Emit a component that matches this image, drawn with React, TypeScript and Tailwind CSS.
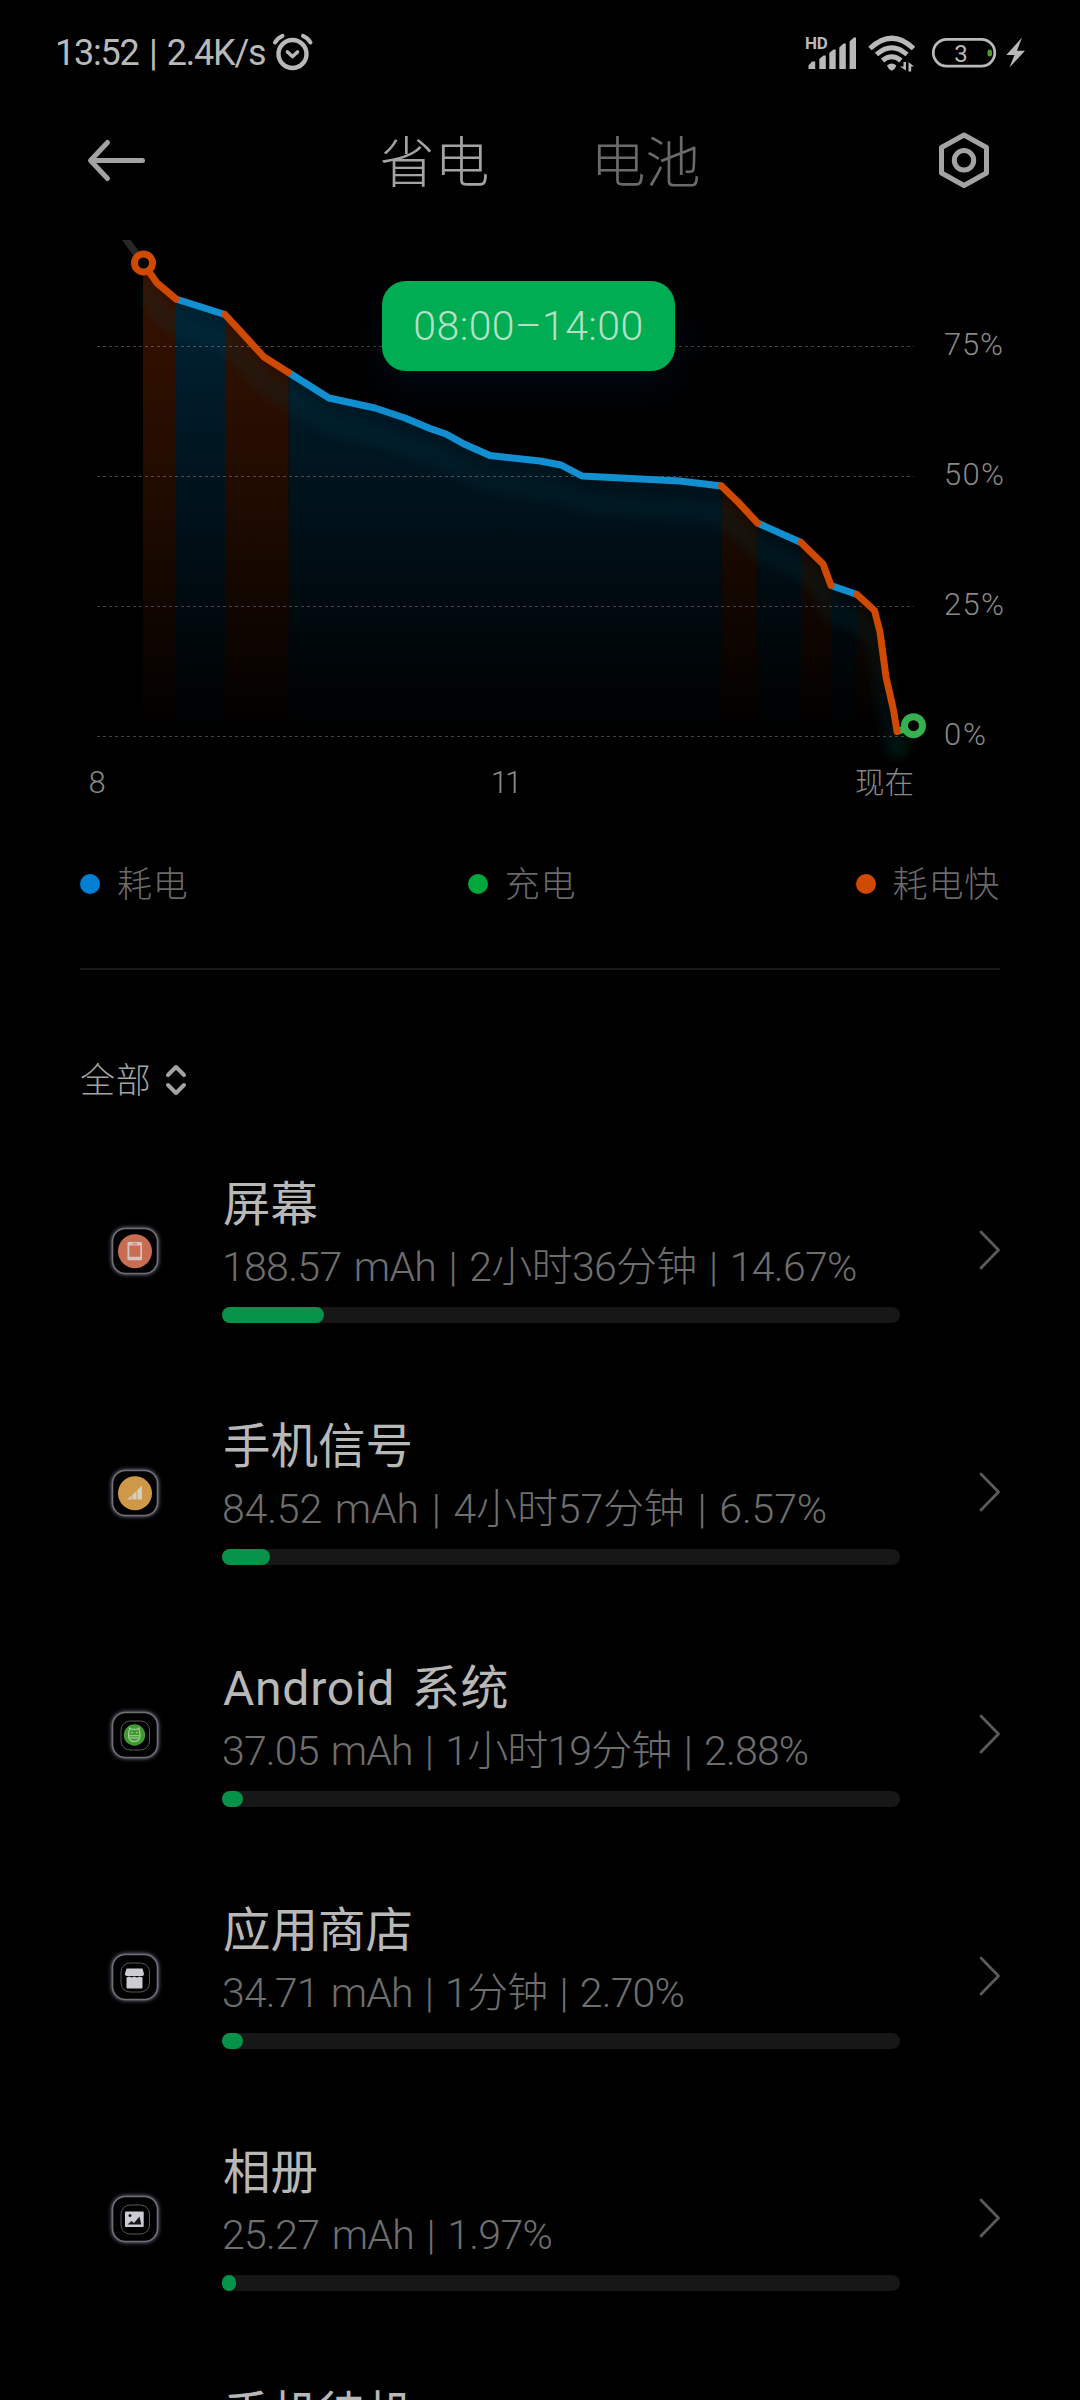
import type { ReactNode } from 'react'

type Segment = { kind: 'normal' | 'fast'; points: [number, number][] }

const segments: Segment[] = [
  { kind: 'normal', points: [[176, 299], [225, 314.5]] },
  {
    kind: 'normal',
    points: [
      [288.5, 372.5], [329, 398], [375, 408], [405, 418], [430, 428.5], [446, 434], [464, 444],
      [490, 455.5], [540, 461], [561, 465], [582, 476], [680, 481], [721.5, 486],
    ],
  },
  { kind: 'normal', points: [[757.5, 523], [801, 542.5]] },
  { kind: 'normal', points: [[831, 585.5], [857, 594.5]] },
  { kind: 'fast', points: [[143, 263], [157, 283], [176, 299]] },
  { kind: 'fast', points: [[225, 314.5], [264, 357], [288.5, 372.5]] },
  { kind: 'fast', points: [[721.5, 486], [738, 502], [757.5, 523]] },
  { kind: 'fast', points: [[801, 542.5], [823, 564], [831, 585.5]] },
  {
    kind: 'fast',
    points: [[857, 594.5], [874.5, 610.5], [880, 632], [886, 677], [893.5, 710], [897, 731.5]],
  },
]

const gridLines = [346.5, 476.5, 606.5, 736.5]

const legend = [
  { label: '耗电', color: 'bg-[#007fd3]' },
  { label: '充电', color: 'bg-[#00a73c]' },
  { label: '耗电快', color: 'bg-[#cf4900]' },
]

const toPath = (points: [number, number][]) => 'M' + points.map((p) => p.join(' ')).join('L')

const toArea = (points: [number, number][]) =>
  `${toPath(points)}L${points[points.length - 1][0]} 736L${points[0][0]} 736Z`

const wholeLine =
  'M143 263L157 283L176 299L225 314L264 357L289 372L329 398L375 408L430 428L490 455L561 465L582 476L721 486L758 523L801 542L823 564L831 585L857 594L874 610L880 632L886 677L897 731'

function StatusBar() {
  return (
    <div className="flex h-[104px] items-center justify-between pl-[55px] pr-[54px] text-[#b9b9b9]">
      <div className="flex items-center">
        <span className="w-[215px] whitespace-pre pt-0.5 text-[36px] leading-[40px] tracking-[-1.2px] [word-spacing:2.5px]">13:52 | 2.4K/s</span>
        <svg width="44" height="44" viewBox="270 31 44 44" fill="none" stroke="currentColor" strokeLinecap="round">
          <circle cx="292.5" cy="55" r="14" strokeWidth="4.4" />
          <path d="M287.5 53L292.5 57.5L297.5 53" strokeWidth="3.6" strokeLinejoin="round" />
          <path d="M275 43.5Q277.5 39 282.5 36.8M310.5 43.5Q308 39 303 36.8" strokeWidth="4" />
        </svg>
      </div>
      <svg width="222" height="44" viewBox="804 31 222 44" fill="currentColor">
        <text x="805" y="49.5" fontSize="17" fontWeight="700" letterSpacing="-0.3">HD</text>
        <path d="M808.5 70V66.5L812 62.5H815.2V70ZM819.3 70V60L823.5 56.5H825.8V70ZM829.3 70V54L833.5 50.6H835.7V70ZM839.3 70V48.5L843.5 44.5H845.8V70ZM849.6 70V42.5L853.8 38.6H856V70Z" />
        <g fill="none" stroke="currentColor" strokeWidth="5">
          <path d="M870 49.5Q891.7 29 913.5 49.5" />
          <path d="M876.5 55.5Q891.7 42 907 55.5" />
          <path d="M882.5 61.5Q891.7 54 901 61.5" />
        </g>
        <path d="M887 66.5Q891.7 62.5 896.4 66.5Q895.5 70 891.7 71.8Q888 70 887 66.5Z" />
        <path d="M903.5 63H906V71.5L900 67.5H903.5ZM908.5 72.5V63L914 67.5H911.2V72.5Z" />
        <rect x="933.3" y="40.3" width="61.5" height="26.8" rx="13.4" fill="none" stroke="currentColor" strokeWidth="2.7" />
        <text x="961" y="62.5" fontSize="24" textAnchor="middle">3</text>
        <rect x="987.5" y="50.5" width="4.5" height="7" rx="2.2" fill="#4c9c1e" />
        <path d="M1022 38.6L1006.3 56H1014.5L1009.3 68.8L1025 51.7H1017Z" />
      </svg>
    </div>
  )
}

function Header() {
  return (
    <div className="flex h-[136px] items-start justify-between pl-[87px] pr-[89px] pt-[26px] text-[#a3a3a3]">
      <svg width="60" height="66" viewBox="87 135 60 66" fill="none" stroke="currentColor" strokeWidth="5" strokeLinecap="round" strokeLinejoin="round">
        <path d="M142.5 165.5H91M107.5 147.5L90.5 165.5L107.5 183.5" />
      </svg>
      <div className="flex gap-[101px] pr-1 text-[55px] font-light leading-[66px]">
        <span>省电</span>
        <span className="text-[#6a6a6a]">电池</span>
      </div>
      <svg width="54" height="66" viewBox="937 135 54 66" fill="none" stroke="currentColor" strokeWidth="5" strokeLinejoin="round">
        <path d="M964 140L986.5 152.5V178L964 190.5L941.5 178V152.5Z" />
        <circle cx="964" cy="165.3" r="9.7" />
      </svg>
    </div>
  )
}

function Chart() {
  return (
    <div className="relative">
      <svg className="block" width="1080" height="580" viewBox="0 240 1080 580" fill="none">
        <defs>
          <linearGradient id="normal" gradientUnits="userSpaceOnUse" x1="0" y1="263" x2="0" y2="736">
            <stop offset="0" stopColor="#002638" />
            <stop offset="0.5" stopColor="#00121b" />
            <stop offset="1" stopColor="#000" />
          </linearGradient>
          <linearGradient id="fast" gradientUnits="userSpaceOnUse" x1="0" y1="263" x2="0" y2="736">
            <stop offset="0" stopColor="#381200" />
            <stop offset="0.5" stopColor="#1f0b00" />
            <stop offset="1" stopColor="#000" />
          </linearGradient>
          <filter id="soft" x="-20%" y="-20%" width="140%" height="140%">
            <feGaussianBlur stdDeviation="7" />
          </filter>
          <filter id="dot" x="-200%" y="-200%" width="500%" height="500%">
            <feGaussianBlur stdDeviation="7" />
          </filter>
        </defs>

        {segments.map((s, i) => (
          <path key={i} d={toArea(s.points)} fill={s.kind === 'fast' ? 'url(#fast)' : 'url(#normal)'} />
        ))}
        <path d={wholeLine} transform="translate(0 27)" stroke="#10444c" strokeOpacity="0.2" strokeWidth="16" filter="url(#soft)" />
        <circle cx="900" cy="746" r="10" fill="#0c4a18" fillOpacity="0.25" filter="url(#dot)" />

        {gridLines.map((y) => (
          <path key={y} d={`M97 ${y}H914`} stroke="#fff" strokeOpacity="0.26" strokeDasharray="3 3" />
        ))}

        <path d="M122 234L143 263" stroke="#27272a" strokeWidth="7" />
        <path d="M897 731.5L913 726" stroke="#34b251" strokeWidth="7" />
        {segments.map((s, i) => (
          <path
            key={i}
            d={toPath(s.points)}
            stroke={s.kind === 'fast' ? '#cf4900' : '#118fd1'}
            strokeWidth="7"
            strokeLinejoin="round"
            strokeLinecap={s.kind === 'fast' ? 'round' : 'butt'}
          />
        ))}
        <circle cx="143.5" cy="263" r="9" fill="#000" stroke="#cf4900" strokeWidth="7" />
        <circle cx="913.5" cy="725.7" r="9" fill="#000" stroke="#34b251" strokeWidth="7" />

        <g fill="#888" fontSize="31" fontWeight="300">
          <text x="944" y="355" textLength="59">75%</text>
          <text x="944" y="485" textLength="60">50%</text>
          <text x="944" y="615" textLength="60">25%</text>
          <text x="944" y="745" textLength="42">0%</text>
          <text x="97" y="793" textAnchor="middle">8</text>
          <text x="505" y="793" textAnchor="middle" letterSpacing="-3">11</text>
          <text x="914" y="793" fontSize="29.5" textAnchor="end">现在</text>
        </g>
      </svg>
      <div className="absolute left-[382px] top-[41px] flex h-[90px] w-[293px] items-center justify-center rounded-[24px] bg-[#00ad53] pt-0.5 text-[41px] font-light tracking-[0.4px] text-[#b5e0c8] shadow-[0_16px_40px_rgba(0,30,60,0.35)]">
        08:00–14:00
      </div>
    </div>
  )
}

function Legend() {
  return (
    <div className="flex h-[150px] items-start justify-between border-b-2 border-[#1a1a1a] pt-[39px] text-[35px] font-light leading-[44px] text-[#6a6a6a]">
      {legend.map((item) => (
        <div key={item.label} className="flex items-center gap-[17px]">
          <span className={`h-5 w-5 rounded-full ${item.color}`} />
          <span className="pt-[5px] tracking-[0.8px]">{item.label}</span>
        </div>
      ))}
    </div>
  )
}

const InnerFrame = () => (
  <rect x="9" y="9" width="28.5" height="29" rx="9" fill="none" stroke="#56565e" strokeWidth="1" />
)

const rows: { name: string; detail: string; width: number; tracking: string; icon: ReactNode }[] = [
  {
    name: '屏幕',
    detail: '188.57 mAh | 2小时36分钟 | 14.67%',
    width: 102,
    tracking: 'tracking-[-0.68px]',
    icon: (
      <>
        <circle cx="23" cy="23.3" r="17" fill="#c86c52" />
        <rect x="15.5" y="14" width="14.5" height="18.3" rx="1" fill="#d5c4bd" />
        <path d="M17.3 17.5H28.3V28.8H17.3ZM20.5 15.3H25V16.2H20.5Z" fill="#c86c52" />
      </>
    ),
  },
  {
    name: '手机信号',
    detail: '84.52 mAh | 4小时57分钟 | 6.57%',
    width: 48,
    tracking: 'tracking-[-0.15px]',
    icon: (
      <>
        <circle cx="23" cy="23.3" r="17" fill="#cf9748" />
        <path d="M15 29.5L19.7 25.5V29.5ZM20.5 24.5L24.5 21V29.5H20.5ZM25.3 20L30 15.8V29.5H25.3Z" fill="#d6cdbd" />
      </>
    ),
  },
  {
    name: 'Android 系统',
    detail: '37.05 mAh | 1小时19分钟 | 2.88%',
    width: 21,
    tracking: 'tracking-[-0.84px]',
    icon: (
      <>
        <InnerFrame />
        <circle cx="22.5" cy="23" r="10.7" fill="#3f9a30" />
        <g fill="none" stroke="#a9d19f" strokeWidth="1.1">
          <path d="M17.5 17.5V16L19.5 17.3H25L27 16V17.5M17.5 17.5Q16.5 19 16.5 23.5Q16.5 29.5 22.3 29.5Q28 29.5 28 23.5Q28 19 27 17.5M16.5 23.8H28" />
          <path d="M19 20.7H20.7M24 20.7H25.7M17.5 26H27" />
        </g>
      </>
    ),
  },
  {
    name: '应用商店',
    detail: '34.71 mAh | 1分钟 | 2.70%',
    width: 21,
    tracking: 'tracking-[-0.85px]',
    icon: (
      <>
        <InnerFrame />
        <path d="M14.5 14.5H30.5L32 20Q32 22 30 22H15Q12.8 22 12.8 20Z" fill="#ccccd2" />
        <path d="M14.5 23.5L17 22.5L19.5 23.5L22.3 22.5L25 23.5L27.5 22.5L30.5 23.5V33.5Q30.5 34.5 29.5 34.5H15.5Q14.5 34.5 14.5 33.5Z" fill="#ccccd2" />
      </>
    ),
  },
  {
    name: '相册',
    detail: '25.27 mAh | 1.97%',
    width: 14,
    tracking: 'tracking-[-0.68px]',
    icon: (
      <>
        <InnerFrame />
        <rect x="13" y="15.5" width="18.7" height="15.5" rx="1" fill="#ccccd2" />
        <circle cx="18" cy="19.5" r="1.5" fill="#15151c" />
        <path d="M15.5 28.5L19.5 25L22 27L27.5 20.5L29.3 28.5Z" fill="#15151c" />
      </>
    ),
  },
  { name: '手机待机', detail: '', width: 10, tracking: '', icon: null },
]

function Row({ row }: { row: (typeof rows)[number] }) {
  return (
    <div className="flex h-[242px] items-start pl-8">
      <div className="flex h-[150px] w-[110px] shrink-0 items-center pt-[1px]">
        <svg className="overflow-visible" width="46" height="46" viewBox="0 0 46 46">
          <rect x="0.5" y="0.5" width="45" height="45" rx="13" fill="#000" className="stroke-[#6f6f75] [filter:drop-shadow(0_0.5px_2px_#8080a0)]" strokeWidth="1.6" />
          {row.icon}
        </svg>
      </div>
      <div className="w-[678px] shrink-0">
        <div
          className={`h-[62px] whitespace-nowrap pl-px text-[#b8b8b8] leading-[60px] ${
            row.name.startsWith('Android') ? 'text-[48px] tracking-[0.75px] [word-spacing:4px]' : 'text-[47.5px]'
          }`}
        >
          {row.name}
        </div>
        <div className="h-[70px]">
          <span className={`whitespace-nowrap text-[41px] font-light leading-[61px] text-[#6e6e6e] [word-spacing:3px] ${row.tracking}`}>
            {row.detail}
          </span>
        </div>
        <div className="h-4 rounded-full bg-[#171717]">
          <div className="h-4 rounded-full bg-[#079249]" style={{ width: row.width }} />
        </div>
      </div>
      <svg className="ml-[77px] mt-[55px] shrink-0" width="24" height="40" viewBox="0 0 24 40" fill="none" stroke="#5a5a5a" strokeWidth="2.8" strokeLinecap="round" strokeLinejoin="round">
        <path d="M4 2L21.5 20L4 38" />
      </svg>
    </div>
  )
}

export default function App() {
  return (
    <div className="h-[2400px] w-[1080px] overflow-hidden bg-black font-['Roboto','Noto_Sans_CJK_SC',sans-serif]" lang="zh-CN">
      <StatusBar />
      <Header />
      <Chart />
      <div className="px-20">
        <Legend />
        <div className="mt-[86px] flex h-12 items-center gap-[13px] text-[#a3a3a3]">
          <span className="pt-1 text-[35px] font-light leading-[48px] tracking-[0.8px]">全部</span>
          <svg width="22" height="32" viewBox="0 0 22 32" fill="none" stroke="currentColor" strokeWidth="4" strokeLinecap="round" strokeLinejoin="round">
            <path d="M3 11L11 3L19 11M3 21L11 29L19 21" />
          </svg>
        </div>
        <div className="mt-[71px]">
          {rows.map((row) => (
            <Row key={row.name} row={row} />
          ))}
        </div>
      </div>
    </div>
  )
}
